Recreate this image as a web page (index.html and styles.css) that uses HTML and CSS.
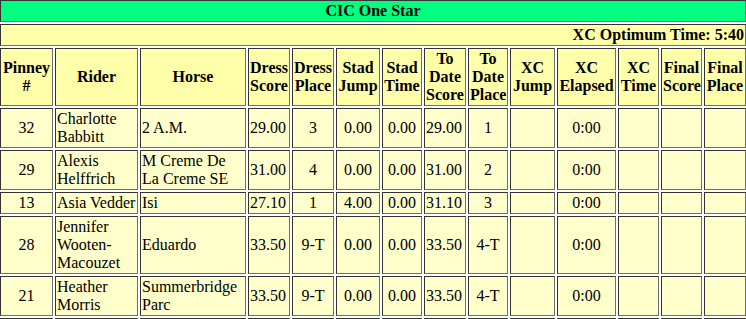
FILE: index.html
```html
<!DOCTYPE html>
<html>
<head>
<meta charset="utf-8">
<title>CIC One Star</title>
<link rel="stylesheet" href="styles.css">
</head>
<body>
<div class="results">
  <div class="cell title">CIC One Star</div>
  <div class="cell optimum">XC Optimum Time: 5:40</div>

  <div class="cell head">Pinney #</div>
  <div class="cell head">Rider</div>
  <div class="cell head">Horse</div>
  <div class="cell head">Dress Score</div>
  <div class="cell head">Dress Place</div>
  <div class="cell head">Stad Jump</div>
  <div class="cell head">Stad Time</div>
  <div class="cell head">To Date Score</div>
  <div class="cell head">To Date Place</div>
  <div class="cell head">XC Jump</div>
  <div class="cell head">XC Elapsed</div>
  <div class="cell head">XC Time</div>
  <div class="cell head">Final Score</div>
  <div class="cell head">Final Place</div>

  <div class="cell data c">32</div>
  <div class="cell data">Charlotte Babbitt</div>
  <div class="cell data">2 A.M.</div>
  <div class="cell data">29.00</div>
  <div class="cell data c">3</div>
  <div class="cell data c">0.00</div>
  <div class="cell data c">0.00</div>
  <div class="cell data">29.00</div>
  <div class="cell data c">1</div>
  <div class="cell data"></div>
  <div class="cell data c">0:00</div>
  <div class="cell data"></div>
  <div class="cell data"></div>
  <div class="cell data"></div>

  <div class="cell data c">29</div>
  <div class="cell data">Alexis Helffrich</div>
  <div class="cell data">M Creme De La Creme SE</div>
  <div class="cell data">31.00</div>
  <div class="cell data c">4</div>
  <div class="cell data c">0.00</div>
  <div class="cell data c">0.00</div>
  <div class="cell data">31.00</div>
  <div class="cell data c">2</div>
  <div class="cell data"></div>
  <div class="cell data c">0:00</div>
  <div class="cell data"></div>
  <div class="cell data"></div>
  <div class="cell data"></div>

  <div class="cell data c">13</div>
  <div class="cell data">Asia Vedder</div>
  <div class="cell data">Isi</div>
  <div class="cell data">27.10</div>
  <div class="cell data c">1</div>
  <div class="cell data c">4.00</div>
  <div class="cell data c">0.00</div>
  <div class="cell data">31.10</div>
  <div class="cell data c">3</div>
  <div class="cell data"></div>
  <div class="cell data c">0:00</div>
  <div class="cell data"></div>
  <div class="cell data"></div>
  <div class="cell data"></div>

  <div class="cell data c">28</div>
  <div class="cell data">Jennifer Wooten-Macouzet</div>
  <div class="cell data">Eduardo</div>
  <div class="cell data">33.50</div>
  <div class="cell data c">9-T</div>
  <div class="cell data c">0.00</div>
  <div class="cell data c">0.00</div>
  <div class="cell data">33.50</div>
  <div class="cell data c">4-T</div>
  <div class="cell data"></div>
  <div class="cell data c">0:00</div>
  <div class="cell data"></div>
  <div class="cell data"></div>
  <div class="cell data"></div>

  <div class="cell data c">21</div>
  <div class="cell data">Heather Morris</div>
  <div class="cell data">Summerbridge Parc</div>
  <div class="cell data">33.50</div>
  <div class="cell data c">9-T</div>
  <div class="cell data c">0.00</div>
  <div class="cell data c">0.00</div>
  <div class="cell data">33.50</div>
  <div class="cell data c">4-T</div>
  <div class="cell data"></div>
  <div class="cell data c">0:00</div>
  <div class="cell data"></div>
  <div class="cell data"></div>
  <div class="cell data"></div>

  <div class="cell data"></div>
  <div class="cell data"></div>
  <div class="cell data"></div>
  <div class="cell data"></div>
  <div class="cell data"></div>
  <div class="cell data"></div>
  <div class="cell data"></div>
  <div class="cell data"></div>
  <div class="cell data"></div>
  <div class="cell data"></div>
  <div class="cell data"></div>
  <div class="cell data"></div>
  <div class="cell data"></div>
  <div class="cell data"></div>
</div>
</body>
</html>
```
FILE: styles.css
```css
html, body {
  margin: 0;
  padding: 0;
  background: #ffffff;
}

body {
  font-family: "Liberation Serif", "Times New Roman", serif;
  font-size: 16px;
  line-height: 18px;
  color: #000000;
}

.results {
  display: grid;
  width: 746px;
  grid-template-columns: 53px 83px 106px 42px 42px 44px 40px 42px 40px 45px 59px 41px 41px 42px;
  gap: 2px;
}

.cell {
  display: flex;
  flex-direction: column;
  justify-content: center;
  padding: 1px;
  border-style: solid;
  border-width: 1px;
  border-color: #333333 #6e6e6e #6e6e6e #333333;
  text-align: left;
  min-width: 0;
}

.title {
  grid-column: 1 / -1;
  background: #00ff80;
  font-weight: bold;
  text-align: center;
}

.optimum {
  grid-column: 1 / -1;
  background: #ffffaa;
  font-weight: bold;
  text-align: right;
}

.head {
  background: #ffffaa;
  font-weight: bold;
  text-align: center;
}

.data {
  background: #ffffcc;
}

.c {
  text-align: center;
}
```
